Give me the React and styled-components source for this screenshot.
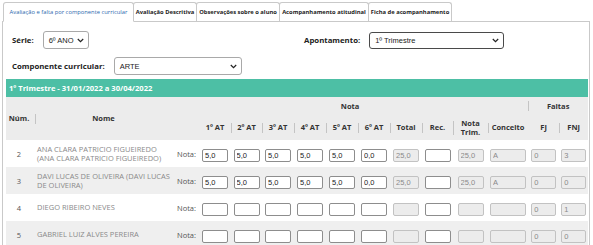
import React from 'react'
import styled, { createGlobalStyle } from 'styled-components'

const GlobalStyle = createGlobalStyle`
  html, body {
    margin: 0;
    padding: 0;
    background: #fff;
  }
  body {
    font-family: 'Open Sans', 'DejaVu Sans', sans-serif;
    color: #333;
  }
`

const tabs = [
  { label: 'Avaliação e falta por componente curricular', width: 131, active: true },
  { label: 'Avaliação Descritiva', width: 64 },
  { label: 'Observações sobre o aluno', width: 84 },
  { label: 'Acompanhamento atitudinal', width: 90 },
  { label: 'Ficha de acompanhamento', width: 84 },
]

const columns = [
  { key: 'at1', label: '1º AT' },
  { key: 'at2', label: '2º AT', sep: true },
  { key: 'at3', label: '3º AT', sep: true },
  { key: 'at4', label: '4º AT', sep: true },
  { key: 'at5', label: '5º AT', sep: true },
  { key: 'at6', label: '6º AT', sep: true },
  { key: 'total', label: 'Total', sep: true },
  { key: 'rec', label: 'Rec.', sep: true },
  { key: 'trim', label: ['Nota', 'Trim.'], sep: true, tall: true },
  { key: 'conceito', label: 'Conceito', sep: true },
  { key: 'fj', label: 'FJ' },
  { key: 'fnj', label: 'FNJ', sep: true },
]

const widths = [29, 137, 27, 32, 31, 32, 32, 32, 32, 32, 31, 35, 40, 31, 29]

const full = ['5,0', '5,0', '5,0', '5,0', '5,0', '0,0']
const none = ['', '', '', '', '', '']

const students = [
  { num: 2, name: 'ANA CLARA PATRICIO FIGUEIREDO (ANA CLARA PATRICIO FIGUEIREDO)', notas: full, total: '25,0', trim: '25,0', conceito: 'A', fj: '0', fnj: '3' },
  { num: 3, name: 'DAVI LUCAS DE OLIVEIRA (DAVI LUCAS DE OLIVEIRA)', notas: full, total: '25,0', trim: '25,0', conceito: 'A', fj: '0', fnj: '0' },
  { num: 4, name: 'DIEGO RIBEIRO NEVES', notas: none, total: '', trim: '', conceito: '', fj: '0', fnj: '1' },
  { num: 5, name: 'GABRIEL LUIZ ALVES PEREIRA', notas: none, total: '', trim: '', conceito: '', fj: '0', fnj: '0' },
]

const Chevron = () => (
  <svg width="7" height="5" viewBox="0 0 7 5">
    <path d="M0.8 1 L3.5 3.7 L6.2 1" fill="none" stroke="#222" strokeWidth="1.2" />
  </svg>
)

export default function App() {
  return (
    <Page>
      <GlobalStyle />
      <TabBar>
        {tabs.map((t) => (
          <Tab key={t.label} w={t.width} active={t.active}>
            {t.label}
          </Tab>
        ))}
      </TabBar>
      <Panel>
        <Form>
          <FormRow>
            <Field w={292}>
              <Label>Série:</Label>
              <Select w={46}>
                <span>6º ANO</span>
                <Chevron />
              </Select>
            </Field>
            <Field>
              <Label>Apontamento:</Label>
              <Select w={135} dark>
                <span>1º Trimestre</span>
                <Chevron />
              </Select>
            </Field>
          </FormRow>
          <FormRow>
            <Field>
              <Label>Componente curricular:</Label>
              <Select w={128}>
                <span>ARTE</span>
                <Chevron />
              </Select>
            </Field>
          </FormRow>
        </Form>
        <PeriodBar>1º Trimestre - 31/01/2022 a 30/04/2022</PeriodBar>
        <Table>
          <colgroup>
            {widths.map((w, i) => (
              <col key={i} style={{ width: w }} />
            ))}
          </colgroup>
          <thead>
            <HeadRow h={18}>
              <Th rowSpan={2} pr={3}>Núm.</Th>
              <Th rowSpan={2} sep>Nome</Th>
              <Th colSpan={11}>Nota</Th>
              <Th colSpan={2} sep>Faltas</Th>
            </HeadRow>
            <HeadRow h={25}>
              <Th />
              {columns.map((c) => (
                <Th key={c.key} sep={c.sep} tall={c.tall}>
                  {Array.isArray(c.label) ? (
                    <TwoLines>
                      <span>{c.label[0]}</span>
                      <span>{c.label[1]}</span>
                    </TwoLines>
                  ) : (
                    c.label
                  )}
                </Th>
              ))}
            </HeadRow>
          </thead>
          <tbody>
            {students.map((s, i) => (
              <Row key={s.num} shaded={i % 2 === 1}>
                <NumCell>{s.num}</NumCell>
                <NameCell>{s.name}</NameCell>
                <NotaLabel>Nota:</NotaLabel>
                {s.notas.map((n, j) => (
                  <InputCell key={j}>
                    <Box value={n} readOnly />
                  </InputCell>
                ))}
                <InputCell>
                  <Box value={s.total} readOnly off />
                </InputCell>
                <InputCell>
                  <Box value="" readOnly />
                </InputCell>
                <InputCell>
                  <Box value={s.trim} readOnly off />
                </InputCell>
                <InputCell>
                  <Box value={s.conceito} readOnly off w={36} />
                </InputCell>
                <InputCell>
                  <Box value={s.fj} readOnly off w={25} />
                </InputCell>
                <InputCell>
                  <Box value={s.fnj} readOnly off w={25} />
                </InputCell>
              </Row>
            ))}
          </tbody>
        </Table>
      </Panel>
    </Page>
  )
}

const Page = styled.div`
  width: 593px;
  height: 245px;
  overflow: hidden;
`

const TabBar = styled.div`
  display: flex;
  height: 21px;
  padding: 2px 0 0 3px;
  box-sizing: border-box;
`

const Tab = styled.div`
  width: ${({ w }) => w}px;
  margin-left: -1px;
  box-sizing: border-box;
  height: ${({ active }) => (active ? 20 : 19)}px;
  border: 1px solid #c9c9c9;
  border-bottom: ${({ active }) => (active ? '1px solid #fff' : 'none')};
  border-radius: 3px 3px 0 0;
  background: #fff;
  position: relative;
  z-index: ${({ active }) => (active ? 2 : 1)};
  display: flex;
  align-items: center;
  justify-content: center;
  white-space: nowrap;
  font-size: 5.8px;
  font-weight: ${({ active }) => (active ? 500 : 700)};
  color: ${({ active }) => (active ? '#2a68ae' : '#222')};
  padding-bottom: ${({ active }) => (active ? 1 : 0)}px;
  &:first-child {
    margin-left: 0;
  }
`

const Panel = styled.div`
  margin-left: 2px;
  width: 588px;
  box-sizing: border-box;
  border: 1px solid #c9c9c9;
  border-bottom: none;
  padding: 0 1px 0 3px;
  min-height: 230px;
`

const Form = styled.div`
  padding: 9px 6px 0;
  display: flex;
  flex-direction: column;
  gap: 8px;
`

const FormRow = styled.div`
  display: flex;
  height: 18px;
  align-items: center;
`

const Field = styled.div`
  display: flex;
  align-items: center;
  gap: 9px;
  width: ${({ w }) => (w ? `${w}px` : 'auto')};
`

const Label = styled.span`
  font-size: 7.8px;
  font-weight: 700;
  color: #222;
`

const Select = styled.div`
  width: ${({ w }) => w}px;
  height: ${({ dark }) => (dark ? 17 : 18)}px;
  box-sizing: border-box;
  border: 1px solid ${({ dark }) => (dark ? '#4a4a4a' : '#a9a9a9')};
  border-radius: 3px;
  background: #fff;
  display: flex;
  align-items: center;
  justify-content: space-between;
  padding: 0 4px 0 5px;
  font-family: 'Liberation Sans', Arial, sans-serif;
  font-size: 7.5px;
  color: #222;
`

const PeriodBar = styled.div`
  margin-top: 4px;
  height: 18px;
  background: #4dbfa5;
  color: #fff;
  font-size: 7.6px;
  font-weight: 700;
  display: flex;
  align-items: center;
  padding-left: 3px;
`

const Table = styled.table`
  width: 582px;
  table-layout: fixed;
  border-collapse: collapse;
  border-spacing: 0;
`

const HeadRow = styled.tr`
  background: #ececec;
  height: ${({ h }) => h}px;
`

const Th = styled.th`
  position: relative;
  padding: 0;
  padding-right: ${({ pr }) => pr || 0}px;
  font-size: 7.5px;
  font-weight: 700;
  color: #333;
  line-height: 9px;
  text-align: center;
  vertical-align: middle;
  white-space: nowrap;
  &::before {
    content: '';
    display: ${({ sep }) => (sep ? 'block' : 'none')};
    position: absolute;
    left: 0;
    top: 50%;
    width: 1px;
    height: ${({ tall }) => (tall ? 14 : 10)}px;
    transform: translateY(-50%);
    background: #c4c4c4;
  }
`

const TwoLines = styled.div`
  display: flex;
  flex-direction: column;
  align-items: center;
  line-height: 9px;
`

const Row = styled.tr`
  background: ${({ shaded }) => (shaded ? '#efefef' : '#fff')};
  height: 27px;
`

const NumCell = styled.td`
  padding: 0 3px 0 0;
  text-align: center;
  font-size: 7.5px;
  color: #555;
`

const NameCell = styled.td`
  padding: 0 2px;
  font-size: 7.5px;
  line-height: 9px;
  color: #8a8a8a;
`

const NotaLabel = styled.td`
  padding: 0 3px 0 0;
  text-align: right;
  font-size: 7.5px;
  color: #555;
`

const InputCell = styled.td`
  padding: 0;
  text-align: center;
  vertical-align: middle;
`

const Box = styled.input`
  display: inline-block;
  vertical-align: middle;
  width: ${({ w }) => w || 26}px;
  height: 13px;
  box-sizing: border-box;
  margin: 0;
  padding: 0 2px;
  border: 1px solid ${({ off }) => (off ? '#c2c2c2' : '#8d8d8d')};
  border-radius: 2px;
  background: ${({ off }) => (off ? '#ececec' : '#fff')};
  color: ${({ off }) => (off ? '#8a8a8a' : '#222')};
  font-family: 'Liberation Sans', Arial, sans-serif;
  font-size: 7.5px;
  outline: none;
`
